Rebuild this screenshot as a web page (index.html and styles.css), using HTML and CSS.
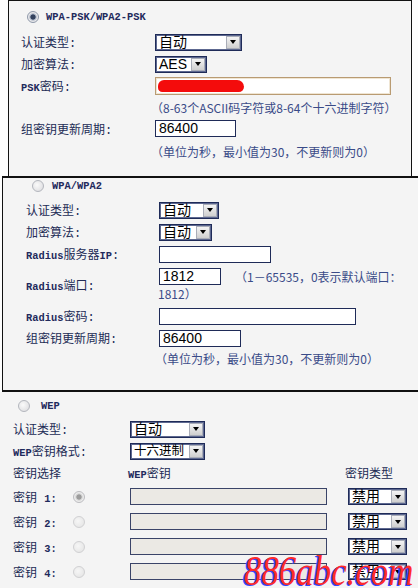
FILE: index.html
```html
<!DOCTYPE html>
<html lang="zh-CN">
<head>
    <meta charset="UTF-8">
    <meta name="viewport" content="width=device-width, initial-scale=1.0">
    <title>无线网络安全设置</title>
    <link rel="stylesheet" href="styles.css">
</head>
<body>
    <!-- WPA-PSK/WPA2-PSK -->
    <div class="panel panel-psk">
        <div class="title"><span class="radio checked"></span><span class="en">WPA-PSK/WPA2-PSK</span></div>
        <div class="form form-psk">
            <div class="label">认证类型:</div>
            <div class="ctrl"><div class="sel w-87"><span class="val">自动</span><span class="btn"></span></div></div>

            <div class="label">加密算法:</div>
            <div class="ctrl"><div class="sel w-52"><span class="val">AES</span><span class="btn"></span></div></div>

            <div class="label"><span class="en">PSK</span>密码:</div>
            <div class="ctrl"><div class="inp inp-psk w-236"><span class="scribble"></span></div></div>

            <div class="hint">（8-63个ASCII码字符或8-64个十六进制字符）</div>

            <div class="label">组密钥更新周期:</div>
            <div class="ctrl"><div class="inp w-81">86400</div></div>

            <div class="hint">（单位为秒，最小值为30，不更新则为0）</div>
        </div>
    </div>

    <!-- WPA/WPA2 -->
    <div class="panel panel-wpa">
        <div class="title"><span class="radio"></span><span class="en">WPA/WPA2</span></div>
        <div class="form form-wpa">
            <div class="label">认证类型:</div>
            <div class="ctrl"><div class="sel w-60"><span class="val">自动</span><span class="btn"></span></div></div>

            <div class="label">加密算法:</div>
            <div class="ctrl"><div class="sel w-53"><span class="val">自动</span><span class="btn"></span></div></div>

            <div class="label"><span class="en">Radius</span>服务器<span class="en">IP</span>:</div>
            <div class="ctrl"><div class="inp w-112"></div></div>

            <div class="label"><span class="en">Radius</span>端口:</div>
            <div class="ctrl ctrl-port">
                <div class="port-line">
                    <div class="inp w-62">1812</div>
                    <span class="note">（1－65535，0表示默认端口：</span>
                </div>
                <div class="note note-wrap">1812）</div>
            </div>

            <div class="label"><span class="en">Radius</span>密码:</div>
            <div class="ctrl"><div class="inp w-197"></div></div>

            <div class="label">组密钥更新周期:</div>
            <div class="ctrl"><div class="inp w-82">86400</div></div>

            <div class="hint">（单位为秒，最小值为30，不更新则为0）</div>
        </div>
    </div>

    <!-- WEP -->
    <div class="panel panel-wep">
        <div class="title"><span class="radio"></span><span class="en">WEP</span></div>
        <div class="form form-wep">
            <div class="label span-2">认证类型:</div>
            <div class="ctrl"><div class="sel w-75"><span class="val">自动</span><span class="btn"></span></div></div>
            <div></div>

            <div class="label span-2"><span class="en">WEP</span>密钥格式:</div>
            <div class="ctrl"><div class="sel sel-sm w-75"><span class="val">十六进制</span><span class="btn"></span></div></div>
            <div></div>

            <div class="label span-2">密钥选择</div>
            <div class="label head-key"><span class="en">WEP</span>密钥</div>
            <div class="label">密钥类型</div>

            <div class="label">密钥 <span class="en">1:</span></div>
            <div class="ctrl"><span class="radio key checked off"></span></div>
            <div class="ctrl"><div class="inp off w-197"></div></div>
            <div class="ctrl"><div class="sel key-type"><span class="val">禁用</span><span class="btn"></span></div></div>

            <div class="label">密钥 <span class="en">2:</span></div>
            <div class="ctrl"><span class="radio key off"></span></div>
            <div class="ctrl"><div class="inp off w-197"></div></div>
            <div class="ctrl"><div class="sel key-type"><span class="val">禁用</span><span class="btn"></span></div></div>

            <div class="label">密钥 <span class="en">3:</span></div>
            <div class="ctrl"><span class="radio key off"></span></div>
            <div class="ctrl"><div class="inp off w-197"></div></div>
            <div class="ctrl"><div class="sel key-type"><span class="val">禁用</span><span class="btn"></span></div></div>

            <div class="label">密钥 <span class="en">4:</span></div>
            <div class="ctrl"><span class="radio key off"></span></div>
            <div class="ctrl"><div class="inp off w-197"></div></div>
            <div class="ctrl"><div class="sel key-type"><span class="val">禁用</span><span class="btn"></span></div></div>
        </div>
    </div>

    <div class="watermark">886abc.com</div>
</body>
</html>
```

FILE: styles.css
```css
html, body {
    margin: 0;
    height: 588px;
    overflow: hidden;
}
body {
    background: #fdfdfd;
    font-family: "Liberation Mono", "Noto Sans CJK SC", monospace;
    font-size: 12px;
    color: #222b55;
    position: relative;
}
.panel {
    background: #f4f4f4;
    box-sizing: border-box;
}
.panel-psk {
    margin-left: 8px;
    width: 404px;
    height: 176px;
    border: 1px solid #111;
    border-bottom: none;
    padding: 5px 0 0 12px;
}
.panel-wpa {
    margin-left: 2px;
    height: 216px;
    border-top: 2px solid #111;
    border-bottom: 2px solid #111;
    border-left: 1px solid #111;
    padding: 0 0 0 23px;
}
.panel-wep {
    height: 196px;
    padding: 6px 0 0 13px;
}
.title {
    display: flex;
    align-items: center;
    height: 22px;
}
.panel-wpa .title, .panel-wep .title {
    height: 16px;
}
.title .radio {
    margin: 0 7px 0 6px;
}
.panel-wpa .title .radio {
    margin-right: 8px;
}
.panel-wep .title .radio {
    margin: 0 11px 0 5px;
}
.en {
    font-family: "Liberation Mono", monospace;
    font-size: 10.4px;
    font-weight: bold;
    color: #1f2a5c;
}
.form {
    display: grid;
    align-items: center;
}
.form-psk {
    grid-template-columns: 134px auto;
    grid-template-rows: 22px 22px 22px 20px 23px 23px;
    margin-top: 3px;
}
.form-wpa {
    grid-template-columns: 133px auto;
    grid-template-rows: 22px 22px 22px 40px 22px 22px 18px;
    margin-top: 5px;
}
.form-wep {
    grid-template-columns: 57px 60px 215px auto;
    grid-template-rows: 22px 22px 22px 25px 25px 25px 25px;
    margin-top: 4px;
}
.label {
    white-space: nowrap;
}
.span-2 {
    grid-column: span 2;
}
.head-key {
    margin-left: -2px;
}
.ctrl {
    display: flex;
    align-items: center;
}
.hint, .note {
    grid-column: 2;
    font-family: "Noto Sans CJK SC", sans-serif;
    font-size: 12px;
    color: #3a4b88;
    white-space: nowrap;
}
.hint {
    margin-left: -4px;
}
.ctrl-port {
    flex-direction: column;
    align-items: flex-start;
    align-self: stretch;
}
.port-line {
    display: flex;
    align-items: center;
    height: 22px;
    gap: 14px;
}
.note-wrap {
    line-height: 14px;
    margin-left: -1px;
}

/* form controls */
.sel, .inp {
    box-sizing: border-box;
    height: 17px;
    background: #fff;
    border: 1px solid #1f2b58;
    font-family: "Liberation Sans", "Noto Sans CJK SC", sans-serif;
    font-size: 14px;
    color: #000;
    line-height: 15px;
}
.sel {
    display: flex;
    box-shadow: inset 0 0 0 1px #5d6890;
}
.sel .val {
    flex: 1;
    padding-left: 3px;
    overflow: hidden;
    white-space: nowrap;
}
.sel-sm {
    font-size: 12.5px;
}
.sel .btn {
    flex: none;
    width: 14px;
    margin: 1px;
    box-sizing: border-box;
    border: 1px solid #a9adb8;
    background: linear-gradient(#f4f4f4, #cfcfcf);
    display: flex;
    align-items: center;
    justify-content: center;
}
.sel .btn::after {
    content: "";
    border-left: 3.5px solid transparent;
    border-right: 3.5px solid transparent;
    border-top: 4px solid #000;
}
.inp {
    padding-left: 3px;
}
.inp-psk {
    height: 18px;
    border-color: #b99b72;
    box-shadow: inset 0 0 0 1px #efe5d3;
    padding-left: 2px;
    display: flex;
    align-items: center;
}
.scribble {
    display: block;
    width: 86px;
    height: 12px;
    border-radius: 7px 8px 6px 5px;
    background: #f40c0c;
}
.inp.off {
    background: #ebe9e4;
    border-color: #3a4468;
}
.key-type {
    width: 59px;
    margin-left: 3px;
}
.w-52 { width: 52px; }
.w-53 { width: 53px; }
.w-60 { width: 60px; }
.w-62 { width: 62px; }
.w-75 { width: 75px; }
.w-81 { width: 81px; }
.w-82 { width: 82px; }
.w-87 { width: 87px; }
.w-112 { width: 112px; }
.w-197 { width: 197px; }
.w-236 { width: 236px; }

/* radio buttons */
.radio {
    display: inline-block;
    width: 12px;
    height: 12px;
    box-sizing: border-box;
    border-radius: 50%;
    border: 1px solid #b3b6bd;
    background: radial-gradient(circle at 40% 40%, #fafafa, #d9d9dc);
}
.radio.checked {
    border-color: #8f99aa;
    background: radial-gradient(circle, #34425e 0 2.3px, #9aa6bb 2.8px, #e8e8ea 4.2px);
}
.radio.key {
    margin-left: 3px;
}
.radio.off {
    border-color: #d0d0d2;
    background: radial-gradient(circle at 40% 40%, #f6f6f6, #e2e2e2);
}
.radio.checked.off {
    border-color: #bcbcc0;
    background: radial-gradient(circle, #9c9c9c 0 2.3px, #cacaca 2.8px, #ececec 4.2px);
}

.watermark {
    position: absolute;
    left: 244px;
    top: 550px;
    font-family: "Liberation Serif", serif;
    font-style: italic;
    font-size: 42px;
    line-height: 42px;
    color: #ff2a2a;
    text-shadow: -2px 1px 0 #3545ff;
    transform: scaleX(0.83);
    transform-origin: left top;
    white-space: nowrap;
}
```
